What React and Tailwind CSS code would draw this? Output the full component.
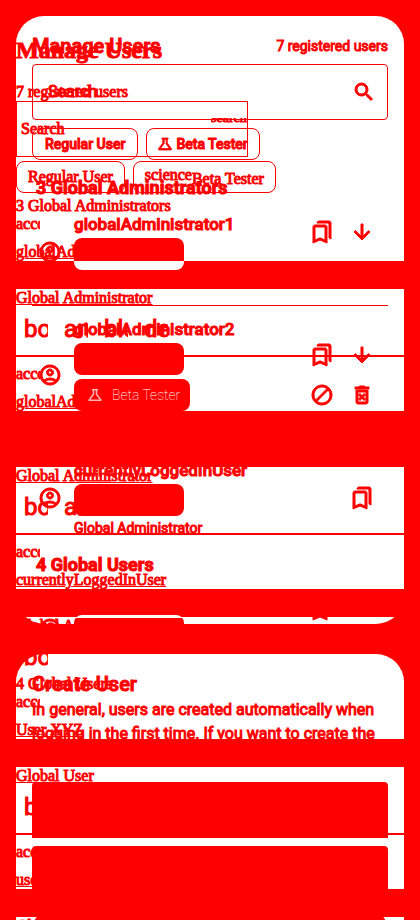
import React from "react";
import {
  MdSearch,
  MdOutlineBookmarks,
  MdArrowDownward,
  MdBlock,
  MdOutlineDeleteForever,
  MdOutlineAccountCircle,
  MdOutlineScience,
} from "react-icons/md";

const ICONS = {
  bookmarks: MdOutlineBookmarks,
  arrow_downward: MdArrowDownward,
  block: MdBlock,
  delete: MdOutlineDeleteForever,
};

const HEAVY = "[&_path:not([fill=none])]:stroke-1";

function IconButton({ name }) {
  const Icon = ICONS[name];
  return (
    <button type="button" aria-label={name} className="flex h-10 w-10 items-center justify-center">
      <Icon className={"h-6 w-6 " + HEAVY} />
    </button>
  );
}

function User({ name, role, chipStyle, beta, actions }) {
  return (
    <li className="flex items-center">
      <MdOutlineAccountCircle className={"mx-1.5 h-6 w-6 shrink-0 " + HEAVY} />
      <div className="ml-1.5 min-w-0 flex-1">
        <p className="mb-0.5 h-6 text-[17px] font-medium leading-6">{name}</p>
        <div className="flex flex-col items-start gap-1">
          <span className={"relative z-20 h-8 w-[110px] rounded-lg " + chipStyle} />
          {beta && (
            <span className="relative z-20 flex h-8 items-center gap-2 rounded-lg bg-[#f00] pl-3 pr-2.5 text-sm font-thin text-white [-webkit-text-stroke:0px]">
              <MdOutlineScience className="h-[18px] w-[18px] opacity-70" />
              Beta Tester
            </span>
          )}
        </div>
        <p className="h-[22px] text-sm leading-6">{role}</p>
      </div>
      <div className={"mr-1.5 grid " + (actions.length > 1 ? "grid-cols-2" : "grid-cols-1")}>
        {actions.map((a) => (
          <IconButton key={a} name={a} />
        ))}
      </div>
    </li>
  );
}

function Divider() {
  return <li className="mb-[11px] mt-[13px] h-px bg-[#f00]" />;
}

function StyledPage() {
  const all = ["bookmarks", "arrow_downward", "block", "delete"];
  return (
    <main className="col-start-1 row-start-1 flex min-w-0 flex-col gap-[30px] p-4 font-[Roboto,sans-serif]">
      <section className="h-[608px] shrink-0 overflow-hidden rounded-[28px] bg-white p-4">
        <header className="flex h-8 items-center justify-between pb-1">
          <h1 className="text-xl font-medium leading-7">Manage Users</h1>
          <span className="text-sm">7 registered users</span>
        </header>
        <label className="flex h-14 items-center rounded border border-[#f00] pl-[15px] pr-[11px]">
          <input
            aria-label="Search"
            placeholder="Search"
            className="min-w-0 flex-1 bg-transparent text-base outline-none placeholder:text-[#f00]"
          />
          <MdSearch className={"h-6 w-6 " + HEAVY} />
        </label>
        <div className="flex gap-2 pb-px pt-2 text-sm font-medium">
          <button type="button" className="h-8 rounded-lg border border-[#f00] px-3">
            Regular User
          </button>
          <button
            type="button"
            className="flex h-8 items-center gap-0.5 rounded-lg border border-[#f00] pl-[9px] pr-[11px]"
          >
            <MdOutlineScience className={"h-[18px] w-[18px] " + HEAVY} />
            Beta Tester
          </button>
        </div>
        <h2 className="h-[51px] pl-1 pt-[13px] text-lg font-bold leading-7">3 Global Administrators</h2>
        <ul>
          <User
            name="globalAdministrator1"
            role="Global Administrator"
            chipStyle="bg-[linear-gradient(#f00_23px,#fafafa_23px)]"
            actions={all}
          />
          <Divider />
          <User name="globalAdministrator2" role="Global Administrator" chipStyle="bg-[#f00]" beta actions={all} />
          <Divider />
          <User name="currentlyLoggedInUser" role="Global Administrator" chipStyle="bg-[#f00]" actions={["bookmarks"]} />
        </ul>
        <h2 className="h-[51px] pl-1 pt-[13px] text-lg font-bold leading-7">4 Global Users</h2>
        <ul>
          <User
            name="User XYZ"
            role="Global User"
            chipStyle="bg-[linear-gradient(#fafafa_3px,#f00_3px)]"
            actions={all}
          />
        </ul>
      </section>
      <section className="flex shrink-0 flex-col rounded-[28px] bg-white p-4">
        <h1 className="text-xl font-medium leading-7">Create User</h1>
        <p className="mb-3 h-[72px] text-base leading-6">
          In general, users are created automatically when logging in the first time. If you want to create the user
          manually.
        </p>
        <input aria-label="Username" className="mb-2 h-14 rounded-t-sm bg-[#f00]" />
        <input aria-label="Display name" className="mb-2 h-14 rounded-t-sm bg-[#f00]" />
        <button type="button" aria-label="Create" className="h-10 rounded-full bg-[#f00]" />
      </section>
    </main>
  );
}

function PlainUser({ name, role, bands, last }) {
  return (
    <li>
      <span className="mb-2.5 block h-[18px] w-6 overflow-hidden leading-[18px]">account_circle</span>
      <a href="#user" className="block h-[18px] leading-[18px] underline">
        {name}
      </a>
      <div className={bands === 2 ? "h-14 bg-[#f00]" : "h-7 bg-[#f00]"} />
      <a href="#role" className="block h-[18px] leading-[18px] underline">
        {role}
      </a>
      <div className="flex h-10 items-center gap-4 px-2 pt-1 font-[Roboto,sans-serif] text-2xl">
        {["bookmarks", "arrow_downward", "block", "delete"].slice(0, name[0] === "c" ? 1 : 4).map((a) => (
          <button key={a} type="button" className="h-6 w-6 overflow-hidden text-left leading-6">
            {a}
          </button>
        ))}
      </div>
      {!last && <div className="my-2 h-0.5 bg-[#f00]" />}
    </li>
  );
}

function PlainPage() {
  return (
    <div className="relative z-10 col-start-1 row-start-1 min-w-0 px-4 pt-8 font-['Liberation_Serif',serif] text-base">
      <h1 className="h-[51px] text-2xl font-bold leading-9">Manage Users</h1>
      <p className="h-[18px] leading-[18px]">7 registered users</p>
      <div className="flex h-14 w-[232px] items-center border border-[#f00] pl-1">
        <input
          aria-label="Search users"
          placeholder="Search"
          className="min-w-0 flex-1 bg-transparent outline-none placeholder:text-[#f00]"
        />
        <span className="mb-4 flex h-1.5 w-9 items-end overflow-hidden text-sm leading-3">search</span>
      </div>
      <div className="flex gap-2 pb-1 pt-1">
        <button type="button" className="h-8 rounded-lg border border-[#f00] px-[11px]">
          Regular User
        </button>
        <button type="button" className="flex h-8 items-center rounded-lg border border-[#f00] px-[11px]">
          <span className="pb-1">science</span>
          <span className="pt-1">Beta Tester</span>
        </button>
      </div>
      <h2 className="h-[18px] leading-[18px]">3 Global Administrators</h2>
      <ul>
        <PlainUser name="globalAdministrator1" role="Global Administrator" />
        <PlainUser name="globalAdministrator2" role="Global Administrator" bands={2} />
        <PlainUser name="currentlyLoggedInUser" role="Global Administrator" last />
      </ul>
      <h2 className="h-[18px] leading-[18px]">4 Global Users</h2>
      <ul>
        <PlainUser name="User XYZ" role="Global User" />
        <PlainUser name="username" role="Global User" last />
      </ul>
    </div>
  );
}

export default function App() {
  return (
    <div className="grid h-screen grid-cols-1 overflow-hidden bg-[#f00] text-[#f00] [-webkit-text-stroke:1px]">
      <StyledPage />
      <PlainPage />
    </div>
  );
}
